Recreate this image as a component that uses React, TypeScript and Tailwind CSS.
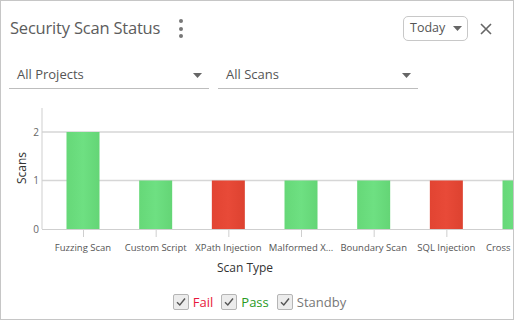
type Scan = { name: string; value: number; status: 'pass' | 'fail' };

const scans: Scan[] = [
  { name: 'Fuzzing Scan', value: 2, status: 'pass' },
  { name: 'Custom Script', value: 1, status: 'pass' },
  { name: 'XPath Injection', value: 1, status: 'fail' },
  { name: 'Malformed X...', value: 1, status: 'pass' },
  { name: 'Boundary Scan', value: 1, status: 'pass' },
  { name: 'SQL Injection', value: 1, status: 'fail' },
  { name: 'Cross', value: 1, status: 'pass' },
];

function Caret() {
  return (
    <svg width="9" height="5" viewBox="0 0 9 5" className="shrink-0">
      <path d="M0 0 L9 0 L4.5 5 Z" fill="#666" />
    </svg>
  );
}

function Dropdown({ label }: { label: string }) {
  return (
    <div className="w-[200px] h-[33px] flex items-center justify-between pt-[6px] pl-[8px] pr-[7px] border-b border-[#bdbdbd] text-[13px] text-[#555]">
      <span>{label}</span>
      <Caret />
    </div>
  );
}

function Check({ label, color }: { label: string; color: string }) {
  return (
    <div className="flex items-center gap-[4px]">
      <div className="w-[16px] h-[16px] rounded-[2px] border border-[#b5b5b5] bg-[#ececec] flex items-center justify-center">
        <svg width="12" height="12" viewBox="0 0 12 12">
          <path d="M2 6.2 L4.8 9 L10 2.5" fill="none" stroke="#555" strokeWidth="1.4" />
        </svg>
      </div>
      <span className={`text-[13px] ${color}`}>{label}</span>
    </div>
  );
}

function Chart() {
  const y0 = 139;
  const unit = 48.5;
  const axisX = 41;
  return (
    <svg width="512" height="186" className="block" style={{ fontFamily: '"Open Sans", sans-serif' }}>
      <defs>
        <linearGradient id="g" x1="0" x2="1">
          <stop offset="0" stopColor="#66d878" />
          <stop offset="0.5" stopColor="#6ee082" />
          <stop offset="1" stopColor="#64d576" />
        </linearGradient>
        <linearGradient id="r" x1="0" x2="1">
          <stop offset="0" stopColor="#e24432" />
          <stop offset="0.5" stopColor="#e84a38" />
          <stop offset="1" stopColor="#dd4230" />
        </linearGradient>
      </defs>
      {[1, 2].map((v) => (
        <line key={v} x1={axisX} x2={512} y1={y0 - v * unit} y2={y0 - v * unit} stroke="#d6d6d6" strokeWidth="1.5" />
      ))}
      <line x1={axisX} x2={axisX} y1={18} y2={y0} stroke="#cfcfcf" />
      <line x1={axisX} x2={512} y1={y0 + 0.5} y2={y0 + 0.5} stroke="#cfcfcf" />
      {[0, 1, 2].map((v) => (
        <text key={v} x={38} y={y0 - v * unit + 3.5} textAnchor="end" fontSize="10" fill="#666">
          {v}
        </text>
      ))}
      <text transform="translate(25 78) rotate(-90)" textAnchor="middle" fontSize="12" fill="#333">
        Scans
      </text>
      {scans.map((s, i) => {
        const cx = 82 + i * 72.67;
        const h = s.value * unit;
        const last = i === scans.length - 1;
        return (
          <g key={s.name}>
            <rect x={cx - 16.5} y={y0 - h} width={33} height={h} fill={s.status === 'pass' ? 'url(#g)' : 'url(#r)'} />
            {!last && <line x1={cx + 0.5} x2={cx + 0.5} y1={y0 + 1} y2={y0 + 8} stroke="#cfcfcf" />}
            <text
              x={last ? 485 : cx}
              y={y0 + 22}
              textAnchor={last ? 'start' : 'middle'}
              fontSize="9.5"
              fill="#555"
            >
              {s.name}
            </text>
          </g>
        );
      })}
      <text x={244} y={182} textAnchor="middle" fontSize="12" fill="#333">
        Scan Type
      </text>
    </svg>
  );
}

export default function App() {
  return (
    <div
      className="w-[514px] h-[320px] border border-[#c6c6c6] bg-white flex flex-col overflow-hidden"
      style={{ fontFamily: '"Open Sans", "Noto Sans", sans-serif' }}
    >
      {/* header */}
      <div className="h-[55px] flex items-center pl-[9px] pr-[21px]">
        <h1 className="text-[16.5px] text-[#5c5c5c] tracking-[-0.2px]">Security Scan Status</h1>
        <div className="ml-[19px] flex flex-col gap-[3.5px]">
          <span className="w-[4px] h-[4px] rounded-full bg-[#777]" />
          <span className="w-[4px] h-[4px] rounded-full bg-[#777]" />
          <span className="w-[4px] h-[4px] rounded-full bg-[#777]" />
        </div>
        <div className="ml-auto flex items-center gap-[12px]">
          <div className="h-[25px] w-[65px] rounded-[5px] border border-[#c8c8c8] flex items-center gap-[8px] pl-[6px] text-[12.5px] text-[#555]">
            <span>Today</span>
            <Caret />
          </div>
          <svg width="12" height="12" viewBox="0 0 12 12">
            <path d="M1 1 L11 11 M11 1 L1 11" stroke="#666" strokeWidth="1.6" />
          </svg>
        </div>
      </div>

      {/* filters */}
      <div className="flex gap-[9px] pl-[8px]">
        <Dropdown label="All Projects" />
        <Dropdown label="All Scans" />
      </div>

      <div className="pt-[1px]">
        <Chart />
      </div>

      {/* legend */}
      <div className="mt-auto pb-[7px] flex justify-center gap-[8px] pl-[5px]">
        <Check label="Fail" color="text-[#e8173c]" />
        <Check label="Pass" color="text-[#2a9a1e]" />
        <Check label="Standby" color="text-[#777]" />
      </div>
    </div>
  );
}
